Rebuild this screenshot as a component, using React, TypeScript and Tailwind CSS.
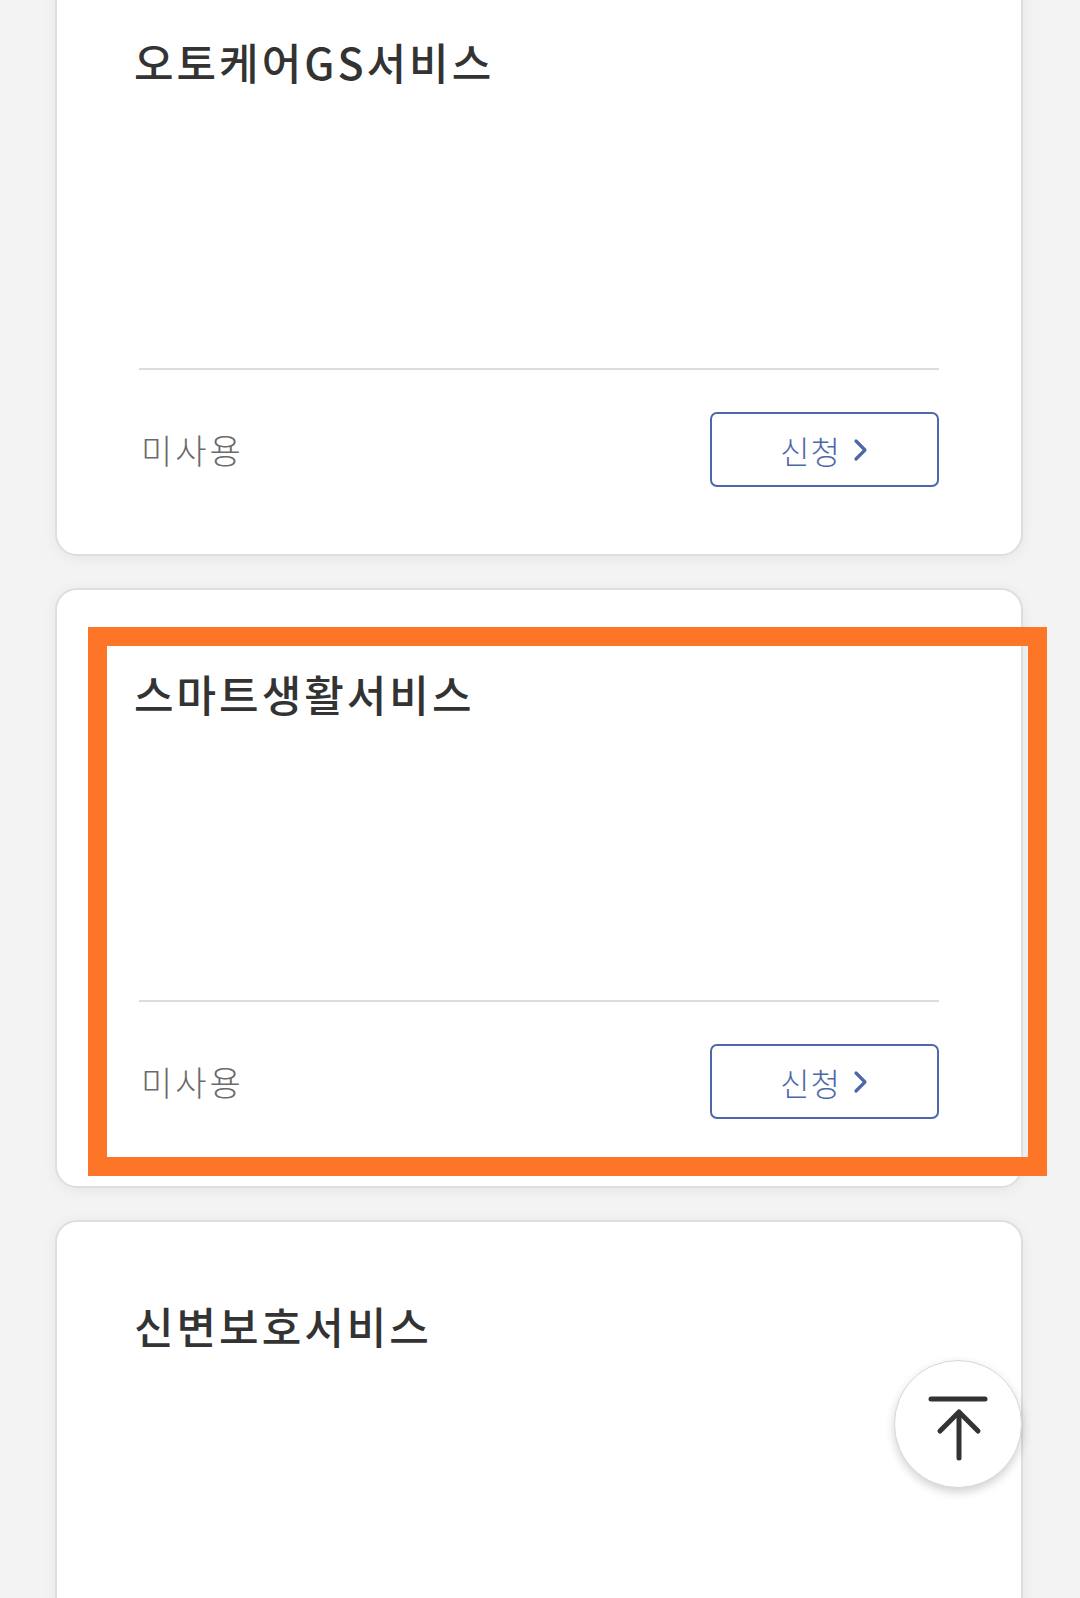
import React from 'react';

const services = ['오토케어GS서비스', '스마트생활서비스', '신변보호서비스'];

function ServiceCard({ title, showFooter = true }: { title: string; showFooter?: boolean }) {
  return (
    <div className="flex h-[600px] shrink-0 flex-col rounded-[22px] border-2 border-[#dedede] bg-white shadow-[0_2px_14px_rgba(0,0,0,0.06)]">
      {/* Title */}
      <h2 className="pl-[77px] pt-[82px] text-[43px] leading-[43px] font-medium tracking-[3px] text-[#333333]">
        {title}
      </h2>
      <div className="flex-1" />

      {/* Footer */}
      {showFooter && (
        <div className="px-[82px]">
          <div className="h-[2px] bg-[#dcdcdc]" />
          <div className="flex items-center justify-between pt-[42px] pb-[67px]">
            <span className="pl-[2px] text-[34px] leading-none font-light tracking-[3px] text-[#6a6a6a]">미사용</span>
            <button className="flex h-[75px] w-[229px] items-center justify-center gap-[12px] rounded-[7px] border-2 border-[#4d68a9] bg-white text-[32px] leading-none font-light text-[#4d68a9]">
              <span className="tracking-[1px]">신청</span>
              <svg width="16" height="24" viewBox="0 0 16 24" fill="none">
                <path d="M3 3 L12 12 L3 21" stroke="#4d68a9" strokeWidth="3.2" strokeLinecap="round" strokeLinejoin="round" />
              </svg>
            </button>
          </div>
        </div>
      )}
    </div>
  );
}

export default function App() {
  return (
    <div
      className="relative h-[1598px] w-[1080px] overflow-hidden bg-[#f3f3f3]"
      style={{ fontFamily: '"Noto Sans CJK KR", "Noto Sans", sans-serif' }}
    >
      <div className="-mt-[44px] flex flex-col gap-[32px] pl-[55px] pr-[57px]">
        {services.map((s, i) => (
          <ServiceCard key={s} title={s} showFooter={i < services.length - 1} />
        ))}
      </div>

      {/* Highlight annotation */}
      <div className="absolute left-[88px] top-[627px] h-[549px] w-[959px] border-[19px] border-[#fd7527]" />

      {/* Scroll to top */}
      <button className="absolute left-[894px] top-[1360px] flex h-[128px] w-[128px] items-center justify-center rounded-full border border-[#d8d8d8] bg-white shadow-[0_4px_10px_rgba(0,0,0,0.18)]">
        <svg width="128" height="128" viewBox="0 0 128 128" fill="none" className="absolute left-0 top-0">
          <path d="M36 38 H90" stroke="#333" strokeWidth="5" strokeLinecap="round" />
          <path d="M45 70 L64 51 L83 70" stroke="#333" strokeWidth="5" strokeLinecap="round" strokeLinejoin="round" />
          <path d="M64 52 V97" stroke="#333" strokeWidth="5" strokeLinecap="round" />
        </svg>
      </button>
    </div>
  );
}
